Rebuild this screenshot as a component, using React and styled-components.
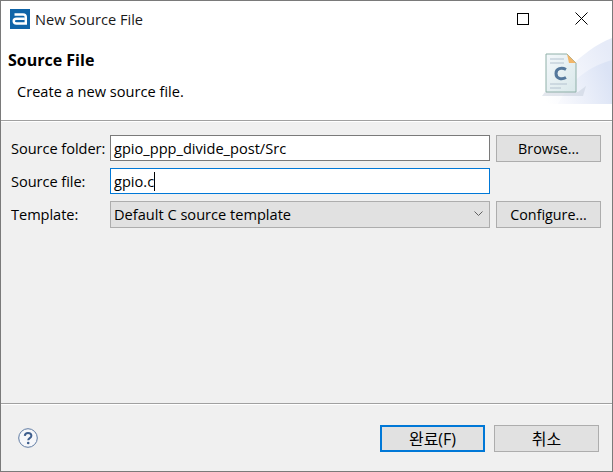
import React from 'react';
import styled, { createGlobalStyle } from 'styled-components';

const GlobalStyle = createGlobalStyle`
  html, body {
    margin: 0;
    padding: 0;
    background: #f0f0f0;
  }
`;

const Window = styled.div`
  width: 613px;
  height: 472px;
  box-sizing: border-box;
  display: flex;
  flex-direction: column;
  border: 1px solid #7a7a7a;
  background: #f0f0f0;
  font-family: 'Open Sans', 'Noto Sans CJK KR', sans-serif;
  font-size: 14.6px;
  color: #000;
`;

const TitleBar = styled.div`
  height: 37px;
  flex: none;
  display: flex;
  align-items: center;
  padding: 0 0 0 9px;
  background: #fff;
`;

const AppIcon = styled.svg`
  width: 20px;
  height: 20px;
  flex: none;
  margin-top: -2px;
`;

const TitleText = styled.span`
  margin-left: 5px;
  margin-top: -2px;
  font-size: 14.6px;
  color: #1a1a1a;
`;

const WindowButtons = styled.div`
  margin-left: auto;
  margin-right: 2px;
  margin-top: -2px;
  display: flex;
`;

const WindowButton = styled.div`
  width: 58px;
  height: 37px;
  display: flex;
  align-items: center;
  justify-content: center;
`;

const Banner = styled.div`
  height: 67px;
  flex: none;
  display: flex;
  justify-content: space-between;
  background: #fff;
`;

const BannerText = styled.div`
  padding-left: 7px;
`;

const BannerTitle = styled.div`
  font-size: 16px;
  font-weight: 700;
  line-height: 22px;
  margin-top: 11px;
`;

const BannerMessage = styled.div`
  margin: 10px 0 0 9px;
  font-size: 14.6px;
  line-height: 20px;
`;

const BannerArt = styled.svg`
  width: 72px;
  height: 67px;
  flex: none;
`;

const Spacer = styled.div`
  height: 15px;
  flex: none;
  background: #fff;
`;

const Divider = styled.div`
  height: 2px;
  flex: none;
  box-sizing: border-box;
  border-top: 1px solid #a0a0a0;
  background: #fff;
`;

const Form = styled.div`
  flex: 1;
  display: grid;
  grid-template-columns: 99px 380px 105px;
  grid-auto-rows: 27px;
  row-gap: 6px;
  align-content: start;
  padding: 13px 0 0 10px;
`;

const Label = styled.label`
  display: flex;
  align-items: center;
  padding-bottom: 2px;
  letter-spacing: -0.05px;
`;

const TextInput = styled.div`
  box-sizing: border-box;
  height: 26px;
  display: flex;
  align-items: center;
  padding-left: 3px;
  background: #fff;
  border: 1px solid ${(p) => (p.$focused ? '#0078d7' : '#7a7a7a')};
`;

const Caret = styled.span`
  width: 1px;
  height: 19px;
  background: #000;
`;

const Combo = styled.div`
  box-sizing: border-box;
  height: 27px;
  display: flex;
  align-items: center;
  justify-content: space-between;
  padding: 0 6px 2px 3px;
  background: #e1e1e1;
  border: 1px solid #adadad;
`;

const PushButton = styled.div`
  box-sizing: border-box;
  width: 105px;
  height: 27px;
  display: flex;
  align-items: center;
  justify-content: center;
  background: #e1e1e1;
  border: ${(p) => (p.$primary ? '2px solid #0078d7' : '1px solid #adadad')};
  font-size: ${(p) => (p.$korean ? 16 : 14.3)}px;
  margin-left: ${(p) => p.$offset || 0}px;
`;

const Footer = styled.div`
  height: 66px;
  flex: none;
  display: flex;
  align-items: center;
  padding: 0 13px 0 17px;
`;

const HelpIcon = styled.svg`
  width: 20px;
  height: 20px;
  flex: none;
`;

const FooterButtons = styled.div`
  margin-left: auto;
  display: flex;
  gap: 9px;
`;

export default function App() {
  return (
    <>
      <GlobalStyle />
      <Window>
        <TitleBar>
          <AppIcon viewBox="0 0 20 20">
            <rect width="20" height="20" fill="#0f64a8" />
            <path d="M4.500 5.500H13c1.800 0 2.800 1 2.800 2.600V14.500H6.500c-1.800 0-2.800-.9-2.800-2.400S4.700 9.700 6.500 9.700h8" fill="none" stroke="#fff" strokeWidth="2.400" />
          </AppIcon>
          <TitleText>New Source File</TitleText>
          <WindowButtons>
            <WindowButton>
              <svg width="12" height="12" viewBox="0 0 12 12">
                <rect x="0.500" y="0.500" width="11" height="11" fill="none" stroke="#000" />
              </svg>
            </WindowButton>
            <WindowButton>
              <svg width="13" height="13" viewBox="0 0 13 13">
                <path d="M0.500 0.500L12.500 12.500M12.500 0.500L0.500 12.500" fill="none" stroke="#000" />
              </svg>
            </WindowButton>
          </WindowButtons>
        </TitleBar>
        <Banner>
          <BannerText>
            <BannerTitle>Source File</BannerTitle>
            <BannerMessage>Create a new source file.</BannerMessage>
          </BannerText>
          <BannerArt viewBox="0 0 72 67">
            <defs>
              <linearGradient id="wash" x1="0" y1="0.800" x2="1" y2="0.300">
                <stop offset="0" stopColor="#fff" />
                <stop offset="1" stopColor="#e6ebf8" />
              </linearGradient>
              <linearGradient id="wash2" x1="0" y1="0.800" x2="1" y2="0.500">
                <stop offset="0" stopColor="#f8f9fd" />
                <stop offset="1" stopColor="#dbe3f5" />
              </linearGradient>
              <linearGradient id="sheet" x1="0" y1="0" x2="1" y2="1">
                <stop offset="0" stopColor="#f4f8fb" />
                <stop offset="1" stopColor="#d9e8ea" />
              </linearGradient>
            </defs>
            <path d="M0 66C15 45 40 12 72 0V66Z" fill="url(#wash)" />
            <path d="M18 66C30 42 50 28 72 22V66Z" fill="url(#wash2)" />
            <path d="M5 54H38L46 48 43 58H2Z" fill="#c2c9d8" opacity="0.450" />
            <path d="M6 16H27L36 25V54H6Z" fill="url(#sheet)" stroke="#8fb0a8" />
            <path d="M27 16L36 25H29Z" fill="#f2b66a" />
            <path d="M10 21H24M10 25H24M10 46H27M10 50H21" stroke="#b4c2cf" strokeWidth="1" />
            <path d="M26 31.500C21.500 29 16 30.500 16 35.500S21.500 42 26 39.500" fill="none" stroke="#55789c" strokeWidth="3" />
          </BannerArt>
        </Banner>
        <Spacer />
        <Divider />
        <Form>
          <Label>Source folder:</Label>
          <TextInput>gpio_ppp_divide_post/Src</TextInput>
          <PushButton $offset={6}>Browse...</PushButton>
          <Label>Source file:</Label>
          <TextInput $focused>
            gpio.c
            <Caret />
          </TextInput>
          <div />
          <Label>Template:</Label>
          <Combo>
            Default C source template
            <svg width="9" height="5" viewBox="0 0 9 5">
              <path d="M0.500 0.500L4.500 4.500L8.500 0.500" fill="none" stroke="#606060" />
            </svg>
          </Combo>
          <PushButton $offset={6}>Configure...</PushButton>
        </Form>
        <Divider />
        <Footer>
          <HelpIcon viewBox="0 0 20 20">
            <circle cx="10" cy="10" r="9.300" fill="#f6f7fa" stroke="#5f7ba3" />
            <path d="M6.800 7.800C7 5.800 8.400 5 10 5c2 0 3.400 1.100 3.400 2.800 0 2.400-3.200 2.300-3.200 4.400" fill="none" stroke="#3f5f8e" strokeWidth="2" />
            <circle cx="10.200" cy="15" r="1.300" fill="#3f5f8e" />
          </HelpIcon>
          <FooterButtons>
            <PushButton $primary $korean>완료(F)</PushButton>
            <PushButton $korean>취소</PushButton>
          </FooterButtons>
        </Footer>
      </Window>
    </>
  );
}
